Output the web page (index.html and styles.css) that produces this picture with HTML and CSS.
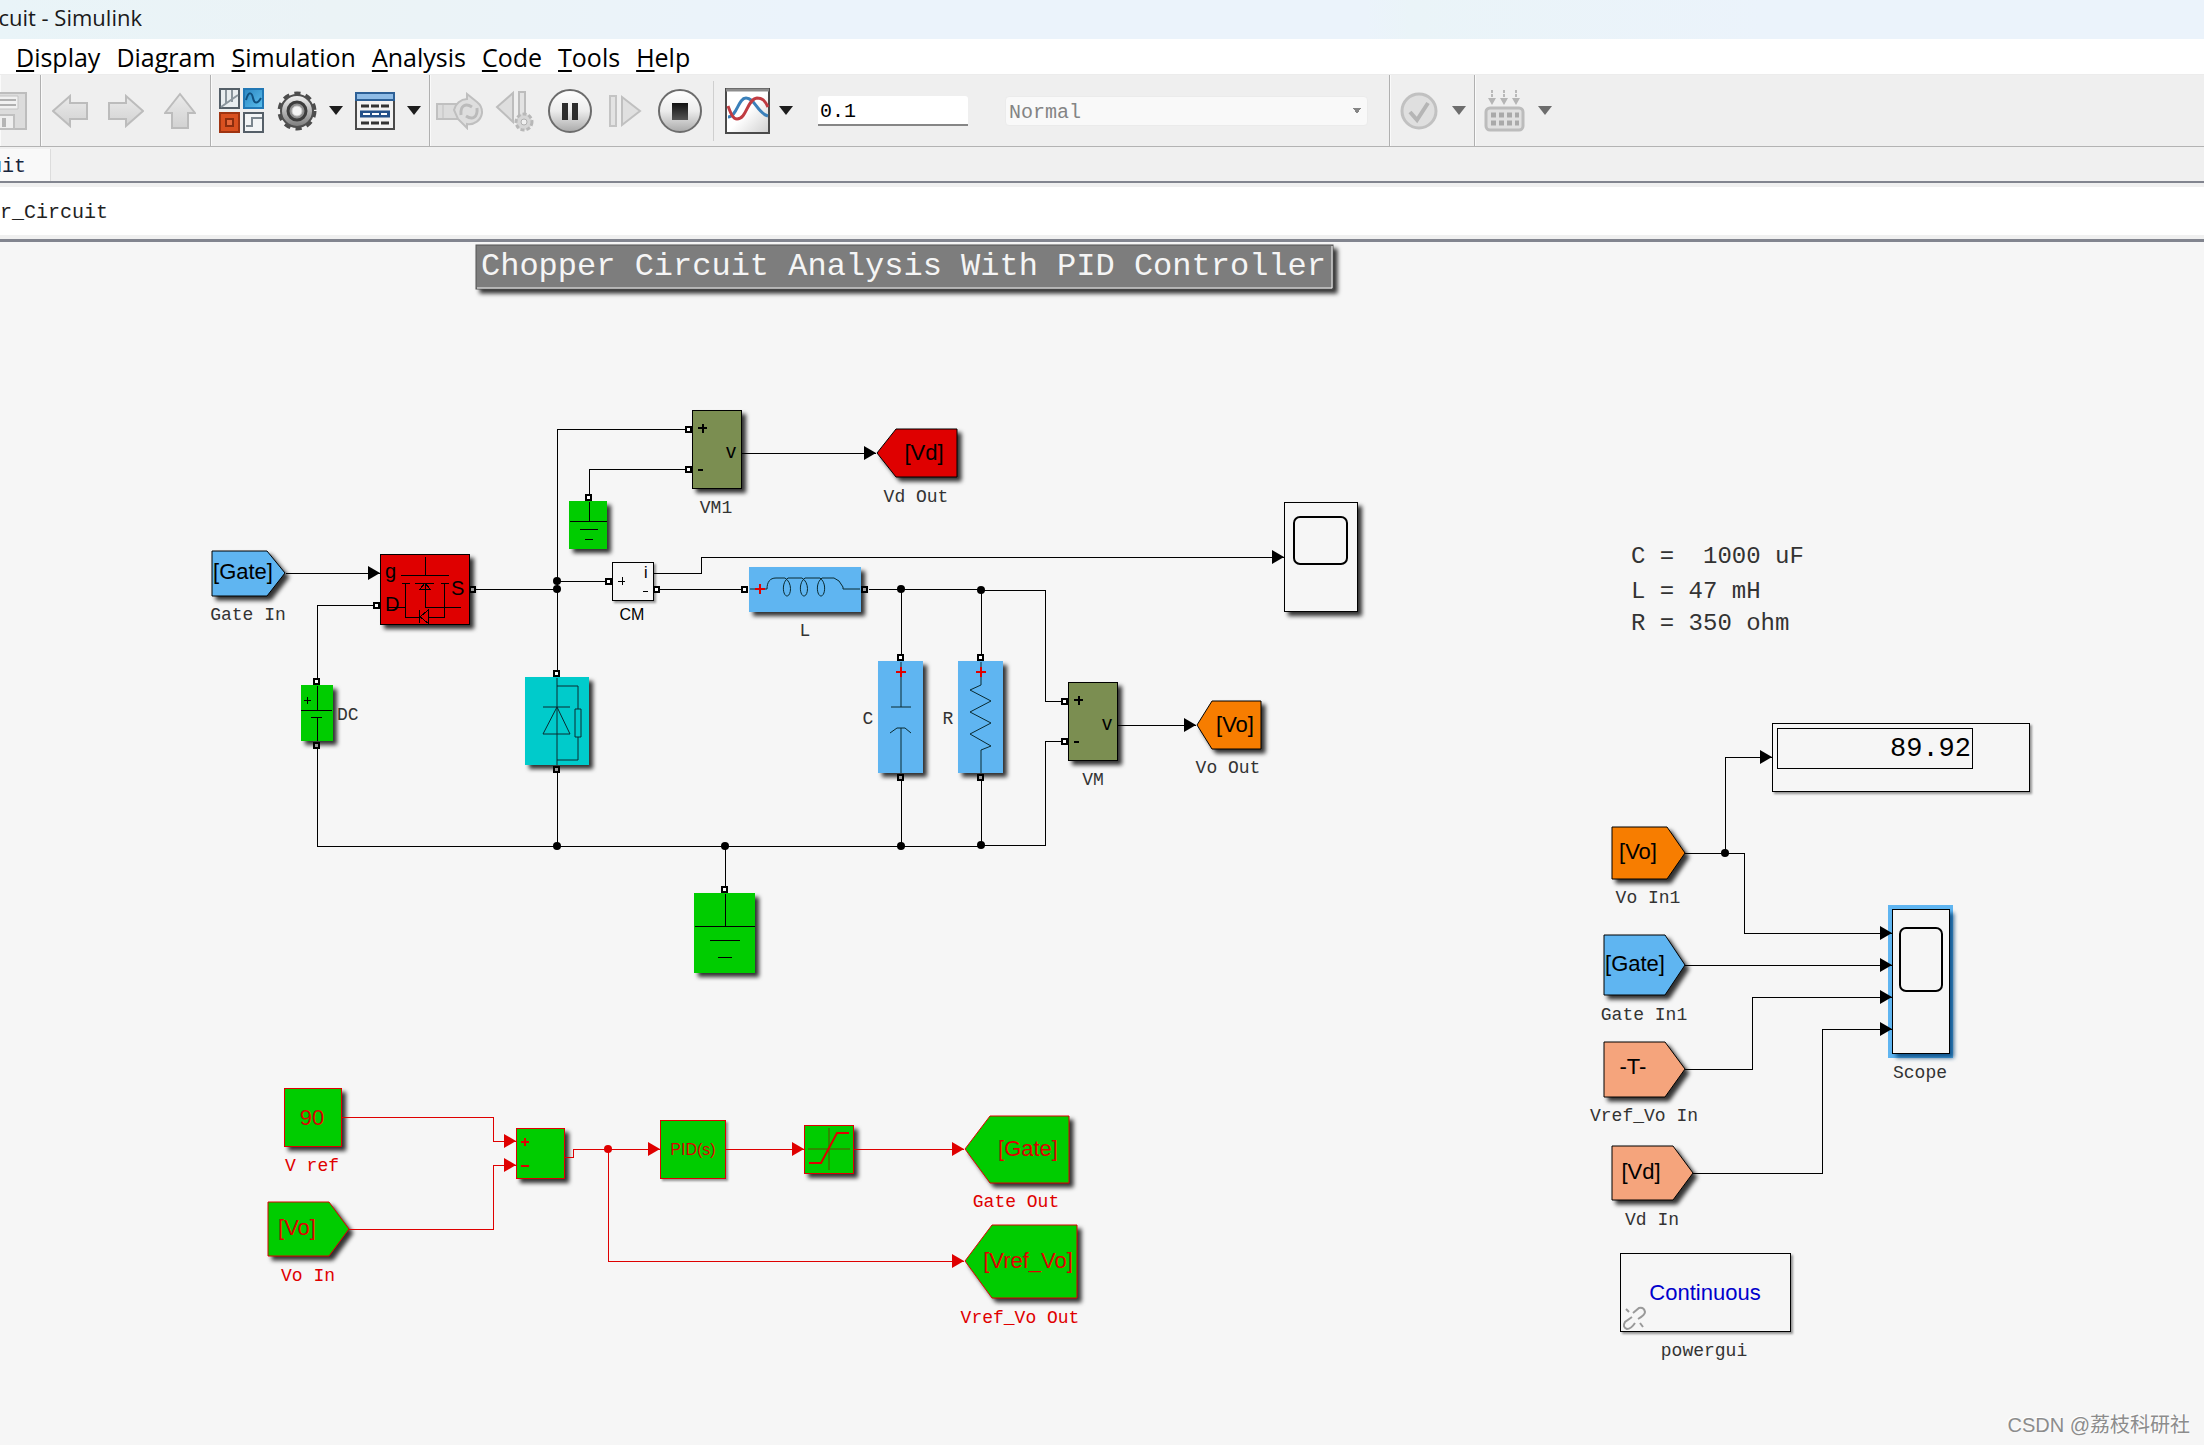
FILE: index.html
```html
<!DOCTYPE html>
<html lang="en">
<head>
<meta charset="utf-8">
<title>Chopper_Circuit - Simulink</title>
<link rel="stylesheet" href="styles.css">
</head>
<body>
<header class="titlebar"><div class="title-text"><span>cuit - Simulink</span></div></header>

<nav class="menubar">
  <a href="#"><u>D</u>isplay</a>
  <a href="#">Diag<u>r</u>am</a>
  <a href="#"><u>S</u>imulation</a>
  <a href="#"><u>A</u>nalysis</a>
  <a href="#"><u>C</u>ode</a>
  <a href="#"><u>T</u>ools</a>
  <a href="#"><u>H</u>elp</a>
</nav>

<div class="toolbar">
  <svg class="defs" width="0" height="0" aria-hidden="true">
    <defs>
      <linearGradient id="ball" x1="0" y1="0" x2="0" y2="1"><stop offset="0" stop-color="#ffffff"/><stop offset="0.5" stop-color="#ececec"/><stop offset="1" stop-color="#a9a9a9"/></linearGradient>
      <linearGradient id="stopfill" x1="0" y1="0" x2="0" y2="1"><stop offset="0" stop-color="#111"/><stop offset="1" stop-color="#555"/></linearGradient>
      <linearGradient id="blue" x1="0" y1="0" x2="1" y2="1"><stop offset="0" stop-color="#2b86c2"/><stop offset="1" stop-color="#5cc0ee"/></linearGradient>
      <linearGradient id="paper" x1="0" y1="0" x2="1" y2="1"><stop offset="0.5" stop-color="#fff"/><stop offset="1" stop-color="#cfcfcf"/></linearGradient>
      <linearGradient id="steel" x1="0" y1="0" x2="0" y2="1"><stop offset="0" stop-color="#f4f4f4"/><stop offset="1" stop-color="#7b7b7b"/></linearGradient>
      <linearGradient id="pale" x1="0" y1="0" x2="0" y2="1"><stop offset="0" stop-color="#eaeaea"/><stop offset="1" stop-color="#d2d2d2"/></linearGradient>
    </defs>
  </svg>
  <div class="group group-file">
    <button class="tool" aria-label="Save"><svg width="28" height="40"><path d="M-10 2H26V38H-10Z" fill="#dcdcdc" stroke="#bdbdbd" stroke-width="2"/><path d="M-8 5H18V18H-8Z" fill="#f1f1f1" stroke="#c4c4c4"/><path d="M-8 9H16M-8 14H16" stroke="#b0b0b0" stroke-width="2"/><path d="M-8 24H14V38H-8Z" fill="#efefef" stroke="#c0c0c0" stroke-width="2"/><path d="M2 27H6V36H2Z" fill="#b5b5b5"/></svg></button>
  </div>
  <div class="group group-nav">
    <button class="tool" aria-label="Back"><svg width="36" height="34"><path d="M1 17L18 2V9H35V25H18V32Z" fill="url(#pale)" stroke="#bcbcbc" stroke-width="2"/></svg></button>
    <button class="tool" aria-label="Forward"><svg width="36" height="34"><path d="M35 17L18 2V9H1V25H18V32Z" fill="url(#pale)" stroke="#bcbcbc" stroke-width="2"/></svg></button>
    <button class="tool" aria-label="Up"><svg width="32" height="38"><path d="M16 2L31 21H24V36H8V21H1Z" fill="url(#pale)" stroke="#bcbcbc" stroke-width="2"/></svg></button>
  </div>
  <div class="group group-model">
    <button class="tool" aria-label="Library Browser"><svg width="46" height="46"><rect x="1" y="1" width="19" height="19" fill="#e9edf0" stroke="#555f68" stroke-width="2"/><path d="M7 2V16M13 2V14M2 19L19 7" stroke="#8b959d" stroke-width="2"/><rect x="25" y="1" width="19" height="19" fill="url(#blue)" stroke="#2278b5" stroke-width="2"/><path d="M27 12C30 2 33 5 34 10S38 17 42 10" fill="none" stroke="#10507f" stroke-width="2"/><rect x="1" y="25" width="19" height="19" fill="#d9501f" stroke="#9f3411" stroke-width="2"/><rect x="7" y="31" width="7" height="7" fill="#e8683a" stroke="#8b2d0e" stroke-width="2"/><rect x="25" y="25" width="19" height="19" fill="#f3f5f6" stroke="#555f68" stroke-width="2"/><path d="M27 38H33V30H43" fill="none" stroke="#7b868e" stroke-width="2"/></svg></button>
    <button class="tool" aria-label="Model Configuration Parameters"><svg width="40" height="42"><circle cx="20" cy="21" r="17" fill="none" stroke="#4c4c4c" stroke-width="5" stroke-dasharray="6 5"/><circle cx="20" cy="21" r="16" fill="url(#steel)" stroke="#4f4f4f" stroke-width="2"/><circle cx="20" cy="21" r="9" fill="#8f8f8f" stroke="#3d3d3d" stroke-width="3"/><circle cx="20" cy="21" r="5" fill="#f4f4f4" stroke="#ccc"/></svg></button>
    <button class="caret" aria-label="Configuration menu"></button>
    <button class="tool" aria-label="Model Explorer"><svg width="40" height="38"><rect x="1" y="1" width="38" height="36" fill="#f2f2f2" stroke="#4a4a4a" stroke-width="2"/><path d="M1 1H39V8H1Z" fill="#8fbce6" stroke="#2d6096" stroke-width="2"/><path d="M5 22H35" stroke="#235089" stroke-width="7"/><path d="M6 14H34M6 31H34" stroke="#333" stroke-width="3" stroke-dasharray="8 2"/><path d="M8 22H32" stroke="#fff" stroke-width="2" stroke-dasharray="7 2"/></svg></button>
    <button class="caret" aria-label="Explorer menu"></button>
  </div>
  <div class="group group-run">
    <button class="tool step" aria-label="Update"><svg width="48" height="38"><path d="M1 12H22V27H1Z" fill="#dcdcdc" stroke="#c0c0c0" stroke-width="2"/><path d="M7 12V27" stroke="#c0c0c0"/><path d="M18 18A14 14 0 0 1 31 7V2L41 10A13 13 0 0 1 46 21A13 13 0 0 1 31 32V36L22 27Z" fill="#dedede" stroke="#bfbfbf" stroke-width="2"/><path d="M25 23C24 13 30 11 36 15M41 16C42 26 36 28 30 24" fill="none" stroke="#bbb" stroke-width="3"/></svg></button>
    <button class="tool step" aria-label="Step Back"><svg width="44" height="42"><path d="M20 3V32L4 17Z" fill="#dedede" stroke="#bdbdbd" stroke-width="2"/><rect x="26" y="2" width="6" height="28" fill="#e3e3e3" stroke="#bdbdbd" stroke-width="2"/><circle cx="31" cy="32" r="8" fill="#d6d6d6" stroke="#b8b8b8" stroke-width="3" stroke-dasharray="4 2"/><circle cx="31" cy="32" r="3" fill="#f0f0f0" stroke="#b0b0b0"/></svg></button>
    <button class="tool step" aria-label="Pause"><svg width="46" height="46"><circle cx="23" cy="23" r="21" fill="url(#ball)" stroke="#6c6c6c" stroke-width="2"/><rect x="15" y="15" width="6" height="17" fill="#2d2d2d"/><rect x="25" y="15" width="6" height="17" fill="#2d2d2d"/></svg></button>
    <button class="tool step" aria-label="Step Forward"><svg width="34" height="34"><rect x="2" y="2" width="6" height="30" fill="#e3e3e3" stroke="#c4c4c4" stroke-width="2"/><path d="M14 3V31L32 17Z" fill="#e0e0e0" stroke="#c0c0c0" stroke-width="2"/></svg></button>
    <button class="tool step" aria-label="Stop"><svg width="46" height="46"><circle cx="23" cy="23" r="21" fill="url(#ball)" stroke="#6c6c6c" stroke-width="2"/><rect x="15" y="15" width="16" height="17" fill="url(#stopfill)"/></svg></button>
    <span class="divider"></span>
    <button class="tool" aria-label="Simulation Data Inspector"><svg width="46" height="46"><rect x="1" y="1" width="43" height="44" fill="url(#paper)" stroke="#4a4a4a" stroke-width="2"/><path d="M1 2H44" stroke="#8d8d8d" stroke-width="3"/><path d="M3 29C12 29 13 10 21 10C30 10 32 25 43 28" fill="none" stroke="#3b80ba" stroke-width="3"/><path d="M3 18C6 26 8 31 12 31C22 31 22 11 32 10C38 10 40 13 43 19" fill="none" stroke="#c03c42" stroke-width="3"/></svg></button>
    <button class="caret" aria-label="Inspector menu"></button>
    <input class="stop-time" type="text" value="0.1" aria-label="Stop time">
    <select class="mode" disabled aria-label="Simulation mode"><option>Normal</option></select>
  </div>
  <div class="group group-check">
    <button class="tool" aria-label="Model Advisor"><svg width="38" height="38"><circle cx="19" cy="19" r="17" fill="#dfdfdf" stroke="#c1c1c1" stroke-width="3"/><path d="M10 20L17 28L28 11" fill="none" stroke="#b5b5b5" stroke-width="4"/></svg></button>
    <button class="caret muted" aria-label="Advisor menu"></button>
  </div>
  <div class="group group-build">
    <button class="tool" aria-label="Build"><svg width="42" height="42"><path d="M8 0V10M20 0V10M32 0V10" stroke="#b9b9b9" stroke-width="2" stroke-dasharray="3 1"/><path d="M4 8H12L8 15ZM16 8H24L20 15ZM28 8H36L32 15Z" fill="#b5b5b5"/><rect x="2" y="18" width="37" height="22" rx="4" fill="#e0e0e0" stroke="#bcbcbc" stroke-width="3"/><path d="M7 25H35M7 33H35" stroke="#a9a9a9" stroke-width="5" stroke-dasharray="5 3"/></svg></button>
    <button class="caret muted" aria-label="Build menu"></button>
  </div>
</div>

<div class="tabs"><button class="tab"><span>uit</span></button></div>
<div class="path"><span class="crumb">r_Circuit</span></div>

<main class="canvas">
<svg class="diagram" role="img" aria-label="Chopper circuit block diagram">
<defs>
  <marker id="arrow" markerUnits="userSpaceOnUse" markerWidth="12" markerHeight="14" refX="12" refY="7" orient="auto"><path d="M0 0L12 7L0 14Z" fill="#000"/></marker>
  <marker id="arrow-red" markerUnits="userSpaceOnUse" markerWidth="12" markerHeight="14" refX="12" refY="7" orient="auto"><path d="M0 0L12 7L0 14Z" fill="#df0000"/></marker>
  <g id="port"><path d="M-3 -3H4V4H-3Z" fill="#000"/><path d="M-1 -1H2V2H-1Z" fill="#fff"/></g>
  <g id="port-shaded"><path d="M-3 -3H4V4H-3Z" fill="#000"/><path d="M-1 -1H2V2H-1Z" fill="#999"/></g>
</defs>
<g transform="translate(0 -242)">
  <!-- model title -->
  <g class="block"><rect x="476" y="245" width="857" height="44" fill="#7d7d7d" stroke="#555"/><path d="M477 288H1332V246" fill="none" stroke="#f5f5f5"/></g>
  <text class="heading" x="481" y="275">Chopper Circuit Analysis With PID Controller</text>

  <!-- power stage wiring -->
  <g class="wire">
    <path class="arrow" d="M286 573H380"/>
    <path d="M374 605H317V679M317 748V846H981V777M476 589H557M557 670V429H686M589 494V469H686M557 581H606M660 589H742M869 589H981V654M901 589V654M901 780V846M981 590H1045V701H1061M1061 741H1045V845H981M557 772V846M725 846V886"/>
    <path class="arrow" d="M742 453H876"/>
    <path class="arrow" d="M654 573H701V557H1284"/>
    <path class="arrow" d="M1118 725H1196"/>
  </g>
  <g class="dots"><circle cx="557" cy="581" r="4"/><circle cx="557" cy="589" r="4"/><circle cx="557" cy="846" r="4"/><circle cx="725" cy="846" r="4"/><circle cx="901" cy="589" r="4"/><circle cx="981" cy="590" r="4"/><circle cx="901" cy="846" r="4"/><circle cx="981" cy="845" r="4"/></g>

  <!-- gate source and switch -->
  <path class="block edge sky" d="M212 551H267L285 573L267 596H212Z"/>
  <text class="tag" x="243" y="579">[Gate]</text><text class="label" x="248" y="620">Gate In</text>
  <rect class="block edge red" x="380" y="554" width="89" height="70"/>
  <path class="glyph" d="M425 557V575M401 575H449M402 583H410M415 583H434M441 583H449M425 583V607H461M425 583L420 589H430ZM405 583V617H419M388 607H405M444 583V617H428M419 610V623M420 617L428 610V623Z"/>
  <g class="pin"><text x="385" y="578">g</text><text x="385" y="611">D</text><text x="451" y="595">S</text></g>

  <!-- source -->
  <rect class="block green" x="301" y="685" width="32" height="56"/>
  <path class="glyph" d="M317 686V710M301 710H332M311 717H322M317 717V741M304 700H311M307 697V704"/>
  <text class="label start" x="337" y="720">DC</text>

  <!-- voltage meter 1 and ground -->
  <rect class="block edge olive" x="692" y="410" width="49" height="78"/>
  <path class="glyph bold" d="M698 428H707M703 424V433M698 470H703"/><text class="pin" x="726" y="458">v</text>
  <text class="label" x="716" y="513">VM1</text>
  <rect class="block green" x="569" y="501" width="38" height="48"/>
  <path class="glyph" d="M589 502V521M570 521H607M580 529H598M585 539H593"/>
  <path class="block edge red" d="M877 453L896 429H957V477H896Z"/>
  <text class="tag" x="924" y="460">[Vd]</text><text class="label" x="916" y="502">Vd Out</text>

  <!-- current meter -->
  <rect class="block light edge plain" x="612" y="562" width="41" height="38"/>
  <path class="glyph" d="M618 581H625M622 577V585M643 591H648"/><text class="pin small" x="644" y="578">i</text>
  <text class="small mid" x="632" y="620">CM</text>

  <!-- inductor, diode, capacitor, resistor -->
  <rect class="block sky" x="749" y="567" width="112" height="45"/>
  <path class="glyph soft" d="M750 589H767C767 582 770 578 776 578H785C793 583 791 596 787 596S781 583 788 578H802C810 583 808 596 804 596S798 583 805 578H820C827 583 825 596 821 596S815 583 822 578H834L839 581L843 587V589H860"/>
  <path class="plus" d="M755 589H765M760 584V594"/><text class="label" x="805" y="636">L</text>
  <rect class="block teal" x="525" y="677" width="64" height="88"/>
  <path class="glyph soft" d="M557 678V765M543 707H570M557 707L543 734H570ZM557 686H578V709M575 709H581V737H575ZM578 737V760H557"/>
  <rect class="block sky" x="878" y="661" width="45" height="112"/>
  <path class="glyph soft" d="M901 662V707M891 707H911M890 733L897 728H905L911 733M901 728V773"/><path class="plus" d="M896 672H906M901 667V677"/>
  <rect class="block sky" x="958" y="661" width="45" height="112"/>
  <path class="glyph soft" d="M981 662V685L970 690L991 701L970 712L991 723L970 734L991 746L981 750V773"/><path class="plus" d="M976 672H986M981 667V677"/>
  <text class="label" x="868" y="724">C</text><text class="label" x="948" y="724">R</text>

  <!-- output meter and ground -->
  <rect class="block edge olive" x="1068" y="682" width="49" height="78"/>
  <path class="glyph bold" d="M1074 700H1083M1079 696V705M1074 742H1079"/><text class="pin" x="1102" y="730">v</text>
  <text class="label" x="1093" y="785">VM</text>
  <path class="block edge orange" d="M1197 725L1212 701H1261V749H1212Z"/>
  <text class="tag" x="1235" y="732">[Vo]</text><text class="label" x="1228" y="773">Vo Out</text>
  <rect class="block green" x="694" y="893" width="61" height="80"/>
  <path class="glyph" d="M725 894V926M695 926H755M710 940H740M718 957H732"/>
  <rect class="block edge plain" x="1284" y="502" width="73" height="109"/>
  <rect class="screen" x="1294" y="517" width="53" height="47" rx="6"/>

  <use href="#port-shaded" x="472" y="589"/><use href="#port" x="376" y="605"/><use href="#port" x="316" y="681"/><use href="#port-shaded" x="316" y="745"/>
  <use href="#port" x="688" y="429"/><use href="#port" x="688" y="469"/><use href="#port" x="588" y="497"/><use href="#port" x="608" y="581"/><use href="#port" x="656" y="589"/>
  <use href="#port" x="744" y="589"/><use href="#port-shaded" x="864" y="589"/><use href="#port" x="556" y="673"/><use href="#port-shaded" x="556" y="769"/>
  <use href="#port" x="900" y="657"/><use href="#port-shaded" x="900" y="777"/><use href="#port" x="980" y="657"/><use href="#port-shaded" x="980" y="777"/>
  <use href="#port" x="1064" y="701"/><use href="#port" x="1064" y="741"/><use href="#port" x="724" y="889"/>

  <!-- PID control loop -->
  <g class="control">
    <rect class="block green" x="284" y="1088" width="57" height="58"/><text class="tag" x="312" y="1125">90</text><text class="label" x="312" y="1171">V ref</text>
    <path class="block green" d="M268 1202H329L349 1229L329 1256H268Z"/><text class="tag" x="297" y="1235">[Vo]</text><text class="label" x="308" y="1281">Vo In</text>
    <rect class="block green" x="516" y="1128" width="48" height="50"/><path class="sign" d="M521 1142H529M525 1138V1146M521 1166H529"/>
    <rect class="block light green" x="660" y="1120" width="65" height="58"/><text class="small mid" x="693" y="1155">PID(s)</text>
    <rect class="block green" x="804" y="1125" width="49" height="48"/>
    <path class="axes" d="M829 1128V1170M808 1149H850"/><path class="curve" d="M809 1163H821L837 1133H849"/>
    <path class="block green" d="M965 1149L990 1116H1069V1183H990Z"/><text class="tag" x="1028" y="1156">[Gate]</text><text class="label" x="1016" y="1207">Gate Out</text>
    <path class="block green" d="M965 1261L992 1225H1077V1298H992Z"/><text class="tag" x="1028" y="1268">[Vref_Vo]</text><text class="label" x="1020" y="1323">Vref_Vo Out</text>
    <g class="wire">
      <path class="arrow" d="M341 1117H493V1141H516"/><path class="arrow" d="M349 1229H493V1165H516"/>
      <path class="arrow" d="M565 1157H573V1149H660"/><path class="arrow" d="M726 1149H804"/><path class="arrow" d="M853 1149H964"/><path class="arrow" d="M608 1149V1261H964"/>
    </g>
    <circle class="dot" cx="608" cy="1149" r="4"/>
  </g>

  <!-- component values -->
  <g class="note"><text x="1631" y="563">C =  1000 uF</text><text x="1631" y="598">L = 47 mH</text><text x="1631" y="630">R = 350 ohm</text></g>

  <!-- measurement -->
  <rect class="block light edge plain" x="1772" y="723" width="257" height="68"/>
  <rect class="frame" x="1777" y="728" width="195" height="40"/><text class="readout" x="1971" y="756">89.92</text>
  <path class="block edge orange" d="M1612 827H1667L1685 853L1667 879H1612Z"/><text class="tag" x="1638" y="859">[Vo]</text><text class="label" x="1648" y="903">Vo In1</text>
  <path class="block edge sky" d="M1604 935H1665L1685 965L1665 995H1604Z"/><text class="tag" x="1635" y="971">[Gate]</text><text class="label" x="1644" y="1020">Gate In1</text>
  <path class="block edge peach" d="M1604 1042H1665L1685 1069L1665 1097H1604Z"/><text class="tag" x="1633" y="1074">-T-</text><text class="label" x="1644" y="1121">Vref_Vo In</text>
  <path class="block edge peach" d="M1612 1146H1673L1693 1173L1673 1200H1612Z"/><text class="tag" x="1641" y="1179">[Vd]</text><text class="label" x="1652" y="1225">Vd In</text>
  <rect class="halo" x="1888" y="905" width="65" height="153"/>
  <rect class="block edge plain selected" x="1892" y="909" width="57" height="144"/><rect class="screen" x="1900" y="928" width="42" height="63" rx="6"/><text class="label" x="1920" y="1078">Scope</text>
  <g class="wire">
    <path d="M1685 853H1725"/><path class="arrow" d="M1725 853V757H1772"/><path class="arrow" d="M1725 853H1744V933H1892"/>
    <path class="arrow" d="M1685 965H1892"/><path class="arrow" d="M1685 1069H1752V997H1892"/><path class="arrow" d="M1693 1173H1822V1029H1892"/>
  </g>
  <g class="dots"><circle cx="1725" cy="853" r="4"/></g>

  <!-- solver block -->
  <rect class="block light edge plain" x="1620" y="1253" width="170" height="78"/><text class="tag solver" x="1705" y="1300">Continuous</text>
  <path class="link" d="M1633 1313L1639 1308Q1644 1307 1645 1312Q1645 1315 1638 1319M1632 1317L1625 1322Q1622 1327 1627 1329Q1631 1329 1635 1323M1626 1309L1629 1312M1640 1323L1643 1327"/>
  <text class="label" x="1704" y="1356">powergui</text>
</g>
</svg>
<div class="watermark">CSDN @荔枝科研社</div>
</main>
</body>
</html>
```
FILE: styles.css
```css
* { box-sizing: border-box; }

html, body { height: 100%; }

body {
  margin: 0;
  display: flex;
  flex-direction: column;
  background: #f0f0f0;
  font-family: "Open Sans", "Noto Sans", sans-serif;
  color: #000;
}

.titlebar {
  flex: none;
  height: 39px;
  background: linear-gradient(90deg, #e9f4f8, #ebf3f6 15%, #ebf3fb 36%, #ebf3fb 62%, #eaf4f8 64%, #ebf3fb 80%);
}
.title-text {
  display: flex;
  justify-content: flex-end;
  width: 142px;
  overflow: hidden;
  font-size: 22px;
  line-height: 34px;
  white-space: nowrap;
  color: #1a1a1a;
}

.menubar {
  flex: none;
  display: flex;
  gap: 16px;
  height: 36px;
  padding-left: 16px;
  background: #fff;
  border-bottom: 1px solid #ececec;
  font-size: 25px;
  line-height: 36px;
}
.menubar a { color: #000; text-decoration: none; }
.menubar u { text-decoration-thickness: 2px; text-underline-offset: 3px; }

.toolbar {
  flex: none;
  display: flex;
  height: 72px;
  background: #efefef;
  border-bottom: 1px solid #b3b3b3;
}
.defs { position: absolute; }
.group {
  display: flex;
  align-items: center;
  border-right: 1px solid #b0b0b0;
  box-shadow: inset 1px 0 #fafafa;
}
.group-file { width: 41px; }
.group-nav { width: 170px; gap: 20px; padding-left: 11px; }
.group-model { width: 219px; gap: 12px; padding-left: 8px; }
.group-run { width: 960px; padding-left: 2px; }
.group-check { width: 85px; gap: 14px; padding-left: 10px; }
.group-build { flex: 1; gap: 12px; padding-left: 9px; border-right: 0; }

button {
  padding: 0;
  border: 0;
  background: none;
  font: inherit;
}
.tool { display: block; flex: none; }
.tool svg { display: block; margin: auto; }
.step { width: 55px; }
.caret {
  flex: none;
  width: 14px;
  height: 9px;
  background: #1d1d1d;
  clip-path: polygon(0 0, 100% 0, 50% 100%);
}
.caret.muted { background: #6d6d6d; }
.divider { width: 1px; height: 60px; margin: 0 11px 0 6px; background: #cfcfcf; }
.divider + .tool { margin-right: 8px; }

.stop-time, .mode, .tab, .path {
  font-family: "Liberation Mono", monospace;
  font-size: 20px;
}
.stop-time {
  width: 150px;
  height: 30px;
  margin-left: 25px;
  padding: 4px 2px 0;
  border: 0;
  border-bottom: 2px solid #868686;
  border-radius: 3px 3px 0 0;
  background: #fff;
  color: #000;
}
.mode {
  appearance: none;
  width: 363px;
  height: 30px;
  margin-left: 37px;
  padding: 3px 3px 0;
  border: 1px solid #ebebeb;
  border-radius: 4px;
  background:
    linear-gradient(to top right, transparent 50%, #868686 50%) no-repeat right 10px center / 4px 6px,
    linear-gradient(to top left, transparent 50%, #868686 50%) no-repeat right 6px center / 4px 6px,
    #f9f9f9;
  color: #848484;
  opacity: 1;
}

.tabs {
  flex: none;
  display: flex;
  align-items: flex-end;
  height: 36px;
  border-bottom: 2px solid #82858f;
}
.tab {
  display: flex;
  justify-content: flex-end;
  width: 51px;
  height: 32px;
  padding-right: 24px;
  overflow: hidden;
  border-right: 1px solid #dcdcdc;
  background: #f9f9f9;
  line-height: 36px;
  color: #16243c;
}
.path {
  flex: none;
  height: 59px;
  padding-bottom: 4px;
  border-top: 4px solid #f0f0f0;
  border-bottom: 3px solid #82858f;
  background: linear-gradient(#fff 48px, #f0f0f0 48px);
  line-height: 52px;
  color: #222;
}

.canvas {
  position: relative;
  flex: 1 0 auto;
  display: flex;
  min-height: 1120px;
  background: #f6f6f6;
  overflow: hidden;
}
.diagram { flex: 1; width: 100%; }
.watermark {
  position: absolute;
  right: 14px;
  bottom: 8px;
  font-family: "Liberation Sans", "Noto Sans CJK SC", sans-serif;
  font-size: 20px;
  line-height: 24px;
  color: #8c8c8c;
  text-shadow: -1px -1px #fff;
}

.block { filter: drop-shadow(4px 4px 2px rgba(0, 0, 0, 0.8)); }
.block.light { filter: drop-shadow(2px 2px 1px rgba(0, 0, 0, 0.4)); }
.edge { stroke: #000; }
rect.edge, rect.green { shape-rendering: crispEdges; }
.sky { fill: #5fb5f1; }
.red { fill: #df0000; }
.green { fill: #00cc00; }
.olive { fill: #7b8e51; }
.teal { fill: #00cbcb; }
.orange { fill: #f77d00; }
.peach { fill: #f5a47c; }
.plain { fill: #f6f6f6; }
.halo { fill: #5fb5f1; }
.block.selected { filter: drop-shadow(4px 4px 2px rgba(0, 65, 120, 0.8)); }

.wire path { fill: none; stroke: #000; shape-rendering: crispEdges; }
.wire .arrow { marker-end: url(#arrow); }
.glyph { fill: none; stroke: #000; shape-rendering: crispEdges; }
.glyph.soft { stroke: #0a2a30; shape-rendering: auto; }
.glyph.bold { stroke-width: 2px; }
.plus { fill: none; stroke: #df0000; stroke-width: 2px; }
.screen { fill: none; stroke: #000; stroke-width: 2px; }
.frame { fill: none; stroke: #000; shape-rendering: crispEdges; }
.link { fill: none; stroke: #999; stroke-width: 2px; }

text { font-family: "Liberation Sans", sans-serif; }
.tag { font-size: 22px; text-anchor: middle; }
.pin { font-size: 20px; }
.pin text { font-size: 20px; }
.small { font-size: 16px; }
.mid { text-anchor: middle; }
.solver { fill: #0000cc; }
.label, .heading, .note text, .readout {
  font-family: "Liberation Mono", monospace;
  white-space: pre;
}
.label { font-size: 18px; text-anchor: middle; fill: #333; }
.label.start { text-anchor: start; }
.heading { font-size: 32px; fill: #f5f5f5; }
.note text { font-size: 24px; fill: #333; }
.readout { font-size: 27px; text-anchor: end; }

.control text { fill: #df0000; }
.control .block { stroke: #df0000; }
.control .wire path { stroke: #df0000; }
.control .arrow { marker-end: url(#arrow-red); }
.sign { stroke: #df0000; stroke-width: 2px; }
.axes { stroke: #2f8a00; stroke-width: 2px; }
.curve { fill: none; stroke: #df0000; stroke-width: 2px; }
.dot { fill: #df0000; }
```
